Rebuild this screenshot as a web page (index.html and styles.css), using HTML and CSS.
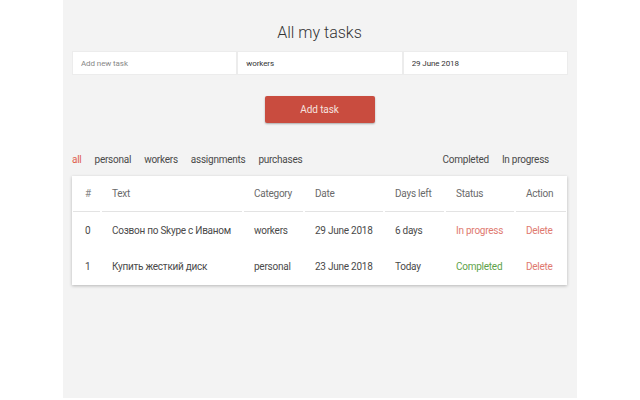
FILE: index.html
```html
<!DOCTYPE html>
<html>
<head>
<meta charset="utf-8">
<link rel="stylesheet" href="styles.css">
</head>
<body>
<div class="app">
  <h1 class="title">All my tasks</h1>
  <div class="form">
    <input class="field" type="text" placeholder="Add new task">
    <input class="field" type="text" value="workers">
    <input class="field" type="text" value="29 June 2018">
  </div>
  <div class="actions"><button class="btn">Add task</button></div>
  <div class="filters">
    <div class="filter-group">
      <span class="filter active">all</span>
      <span class="filter">personal</span>
      <span class="filter">workers</span>
      <span class="filter">assignments</span>
      <span class="filter">purchases</span>
    </div>
    <div class="filter-group">
      <span class="filter">Completed</span>
      <span class="filter">In progress</span>
    </div>
  </div>
  <div class="card">
    <table class="tasks">
      <colgroup>
        <col class="c-num"><col class="c-text"><col class="c-cat"><col class="c-date"><col class="c-days"><col class="c-status"><col class="c-action">
      </colgroup>
      <thead>
        <tr><th class="num">#</th><th>Text</th><th>Category</th><th>Date</th><th>Days left</th><th>Status</th><th>Action</th></tr>
      </thead>
      <tbody>
        <tr><td class="num">0</td><td>Созвон по Skype с Иваном</td><td>workers</td><td>29 June 2018</td><td>6 days</td><td class="progress">In progress</td><td class="delete">Delete</td></tr>
        <tr><td class="num">1</td><td>Купить жесткий диск</td><td>personal</td><td>23 June 2018</td><td>Today</td><td class="done">Completed</td><td class="delete">Delete</td></tr>
      </tbody>
    </table>
  </div>
</div>
</body>
</html>
```
FILE: styles.css
```css
html, body {
  margin: 0;
  padding: 0;
  background: #fff;
  font-family: Roboto, "Liberation Sans", sans-serif;
}
.app {
  margin-left: 63px;
  width: 514px;
  height: 398px;
  background: #f3f3f3;
  box-sizing: border-box;
  padding: 22px 10px 0 9px;
}
.title {
  margin: 0;
  text-align: center;
  font-weight: 300;
  font-size: 16px;
  line-height: 22px;
  color: #333;
}
.form {
  display: flex;
  gap: 2px;
  margin-top: 8px;
  padding-left: 1px;
}
.field {
  flex: 1;
  height: 22px;
  box-sizing: border-box;
  border: none;
  background: #fff;
  box-shadow: 0 0 0 1px #ececec;
  padding: 0 8px;
  font-family: Roboto, "Liberation Sans", sans-serif;
  font-size: 8px;
  letter-spacing: -0.1px;
  color: #333;
  outline: none;
}
.field::placeholder { color: #888; }
.actions {
  display: flex;
  justify-content: center;
  margin-top: 22px;
}
.btn {
  width: 110px;
  height: 27px;
  border: none;
  border-radius: 2px;
  background: #c94c3f;
  color: #f5e2df;
  font-family: Roboto, "Liberation Sans", sans-serif;
  font-size: 10px;
  letter-spacing: -0.1px;
  box-shadow: 0 1px 2px rgba(0,0,0,0.3);
}
.filters {
  display: flex;
  justify-content: space-between;
  margin-top: 30px;
  padding: 0 18px 0 0;
  font-size: 10px;
  letter-spacing: -0.25px;
  line-height: 14px;
  color: #4a4a4a;
}
.filter-group { display: flex; gap: 13px; }
.filter.active { color: #e0604f; }
.card {
  margin-top: 9px;
  background: #fff;
  box-shadow: 0 1px 3px rgba(0,0,0,0.25);
  padding: 0 1px 1px 1px;
}
.tasks {
  table-layout: fixed;
  border-collapse: separate;
  border-spacing: 2px 0;
  margin: 0 -2px;
  width: calc(100% + 4px);
  font-size: 10px;
  letter-spacing: -0.25px;
  color: #4a4a4a;
}
.c-num { width: 27px; }
.c-text { width: 140px; }
.c-cat { width: 59px; }
.c-date { width: 78px; }
.c-days { width: 59px; }
.c-status { width: 68px; }
.c-action { width: 50px; }
.tasks th {
  height: 35px;
  text-align: left;
  font-weight: 400;
  color: #6a6a6a;
  border-bottom: 1px solid #e3e3e3;
  padding: 0 0 0 10px;
}
.tasks td {
  height: 36px;
  padding: 0 0 0 10px;
}
.tasks .num { padding-left: 12px; }
.tasks th.num { color: #888; }
.progress { color: #e07a6f; }
.delete { color: #e07a6f; }
.done { color: #5ea24a; }
```
